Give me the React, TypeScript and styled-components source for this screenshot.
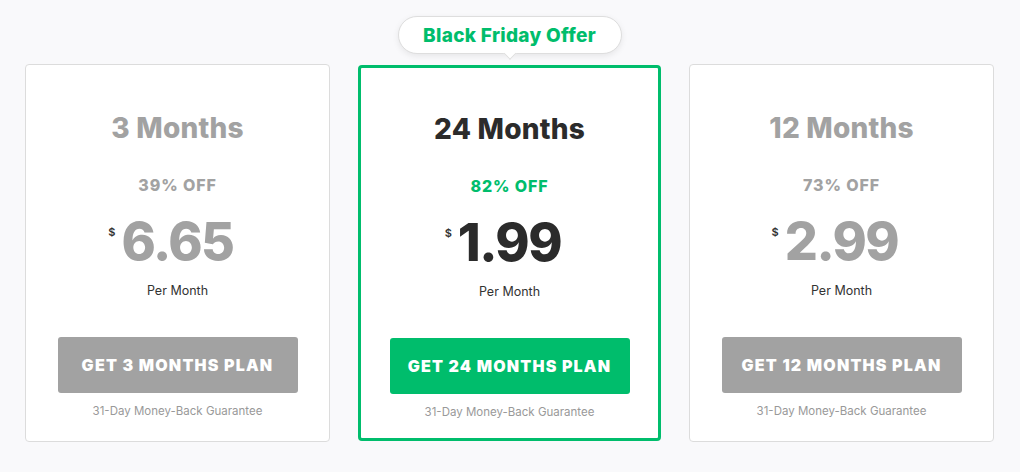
import styled, { createGlobalStyle } from 'styled-components'

const GREEN = '#00bd6c'
const GRAY = '#a2a2a2'
const FONT = "'Inter', 'Lato', 'Noto Sans', sans-serif"

const GlobalStyle = createGlobalStyle`
	html, body {
		margin: 0;
		padding: 0;
		background: #f9f9fb;
		font-family: ${FONT};
	}
`

type Plan = {
	months: number
	off: number
	price: string
	featured?: boolean
}

const plans: Plan[] = [
	{ months: 3, off: 39, price: '6.65' },
	{ months: 24, off: 82, price: '1.99', featured: true },
	{ months: 12, off: 73, price: '2.99' },
]

function PlanCard({ plan }: { plan: Plan }) {
	const { featured } = plan
	return (
		<Card $featured={featured}>
			{featured && <Badge>Black Friday Offer</Badge>}
			<Title $featured={featured}>{plan.months} Months</Title>
			<Off $featured={featured}>{plan.off}% OFF</Off>
			<Price $featured={featured}>
				<Dollar>$</Dollar>
				{plan.price}
			</Price>
			<PerMonth>Per Month</PerMonth>
			<Button $featured={featured}>GET {plan.months} MONTHS PLAN</Button>
			<Guarantee>31-Day Money-Back Guarantee</Guarantee>
		</Card>
	)
}

export default function App() {
	return (
		<>
			<GlobalStyle />
			<Page>
				{plans.map((p) => (
					<PlanCard key={p.months} plan={p} />
				))}
			</Page>
		</>
	)
}

const Page = styled.div`
	display: flex;
	align-items: flex-start;
	gap: 28px;
	padding: 64px 0 0 25px;
`

const Card = styled.div<{ $featured?: boolean }>`
	position: relative;
	box-sizing: border-box;
	width: ${({ $featured }) => ($featured ? '303px' : '305px')};
	height: ${({ $featured }) => ($featured ? '376px' : '378px')};
	margin-top: ${({ $featured }) => ($featured ? '1px' : '0')};
	display: flex;
	flex-direction: column;
	align-items: center;
	background: #fff;
	border: ${({ $featured }) => ($featured ? `3px solid ${GREEN}` : '1px solid #dcdcdc')};
	border-radius: 4px;
	padding-top: ${({ $featured }) => ($featured ? '44px' : '46px')};
`

const Badge = styled.div`
	position: absolute;
	top: -52px;
	left: 50%;
	transform: translateX(-50%);
	box-sizing: border-box;
	width: 224px;
	height: 38px;
	display: flex;
	align-items: center;
	justify-content: center;
	background: #fff;
	border: 1px solid #dedede;
	border-radius: 19px;
	box-shadow: 0 2px 6px rgba(0, 0, 0, 0.08);
	color: ${GREEN};
	font-size: 19px;
	font-weight: 800;
	letter-spacing: 0.3px;
	white-space: nowrap;

	&::after {
		content: '';
		position: absolute;
		bottom: -5px;
		left: 50%;
		width: 8px;
		height: 8px;
		background: #fff;
		border-right: 1px solid #dedede;
		border-bottom: 1px solid #dedede;
		transform: translateX(-50%) rotate(45deg);
	}
`

const Title = styled.div<{ $featured?: boolean }>`
	font-size: 28px;
	line-height: 34px;
	font-weight: 800;
	letter-spacing: 0.2px;
	color: ${({ $featured }) => ($featured ? '#2b2b2b' : GRAY)};
`

const Off = styled.div<{ $featured?: boolean }>`
	margin-top: 30px;
	font-size: 16px;
	line-height: 20px;
	font-weight: 800;
	letter-spacing: 0.9px;
	color: ${({ $featured }) => ($featured ? GREEN : GRAY)};
`

const Price = styled.div<{ $featured?: boolean }>`
	position: relative;
	margin-top: 18px;
	font-size: 52px;
	line-height: 58px;
	font-weight: 800;
	letter-spacing: -1.5px;
	color: ${({ $featured }) => ($featured ? '#2b2b2b' : GRAY)};
`

const Dollar = styled.span`
	position: absolute;
	top: 13px;
	right: calc(100% + 6px);
	font-size: 11px;
	line-height: 12px;
	font-weight: 600;
	letter-spacing: 0;
	color: #333;
`

const PerMonth = styled.div`
	margin-top: 12px;
	font-size: 12.5px;
	line-height: 16px;
	color: #333;
`

const Button = styled.button<{ $featured?: boolean }>`
	margin-top: 38px;
	width: 240px;
	height: 56px;
	border: none;
	border-radius: 3px;
	background: ${({ $featured }) => ($featured ? GREEN : GRAY)};
	color: #fff;
	font-family: ${FONT};
	font-size: 16px;
	font-weight: 900;
	letter-spacing: 1.2px;
	cursor: pointer;
`

const Guarantee = styled.div`
	margin-top: 10px;
	font-size: 11.5px;
	line-height: 16px;
	color: #999;
`
